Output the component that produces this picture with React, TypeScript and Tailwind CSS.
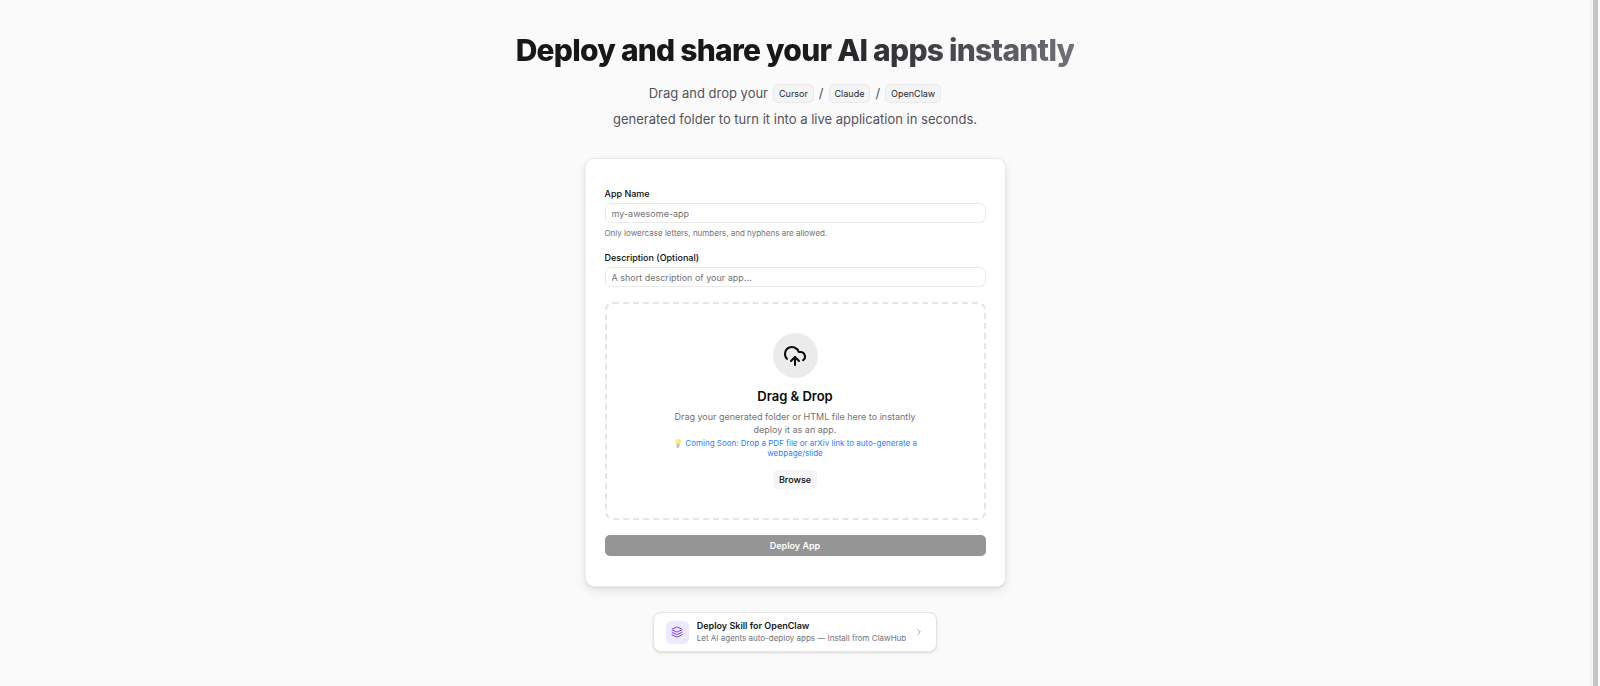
import { ChevronRight, CloudUpload, Layers } from 'lucide-react';

const TOOLS = ['Cursor', 'Claude', 'OpenClaw'];

export default function App() {
  return (
    <div className="flex min-h-screen bg-[#fafafa] font-['Inter',sans-serif] text-[#0a0a0a] antialiased">
      <main className="flex flex-1 flex-col items-center px-4 pt-8 pb-8">
        <Hero />
        <DeployForm />
        <SkillLink />
      </main>
      <div className="flex w-[10px] border-l-2 border-[#f1f1f1] bg-[#f8f8f8] pl-px pr-[2px]" aria-hidden="true">
        <div className="flex-1 bg-[#c4c4c4]" />
      </div>
    </div>
  );
}

function Hero() {
  return (
    <header className="flex flex-col items-center text-center">
      <h1 className="bg-gradient-to-r from-[#18181b] from-50% to-[#71717a] bg-clip-text pb-1 text-[30px] leading-9 font-extrabold tracking-tight text-transparent">
        Deploy and share your AI apps instantly
      </h1>
      <p className="mt-2 text-[13px] leading-[26px] text-[#52525b]">
        <span className="flex items-center justify-center gap-[5px]">
          Drag and drop your
          {TOOLS.map((tool, i) => (
            <span key={tool} className="flex items-center gap-[5px]">
              {i > 0 && <span>/</span>}
              <span className="rounded-[5px] border border-[#e9e9eb] bg-[#f4f4f5] px-[5px] text-[9px] leading-[17px] text-[#27272a]">
                {tool}
              </span>
            </span>
          ))}
        </span>
        generated folder to turn it into a live application in seconds.
      </p>
    </header>
  );
}

function DeployForm() {
  return (
    <form
      className="mt-[26px] w-full max-w-[421px] rounded-[9px] border border-[#ebebeb] bg-white px-[19px] pt-[29px] pb-[30px] shadow-[0_4px_10px_rgb(0_0_0/0.09),0_1px_2px_rgb(0_0_0/0.08)]"
      onSubmit={(e) => e.preventDefault()}
    >
      <Field id="app-name" label="App Name" placeholder="my-awesome-app" />
      <p className="mt-1 text-[8px] leading-3 text-[#737373]">
        Only lowercase letters, numbers, and hyphens are allowed.
      </p>
      <div className="mt-[13px]">
        <Field id="description" label="Description (Optional)" placeholder="A short description of your app..." />
      </div>
      <DropZone />
      <button
        type="submit"
        disabled
        className="mt-[15px] h-[21px] w-full rounded-[5px] bg-[#959595] text-[9px] font-semibold text-white"
      >
        Deploy App
      </button>
    </form>
  );
}

interface FieldProps {
  id: string;
  label: string;
  placeholder: string;
}

function Field({ id, label, placeholder }: FieldProps) {
  return (
    <div>
      <label htmlFor={id} className="block text-[9px] leading-3 font-medium">
        {label}
      </label>
      <input
        id={id}
        type="text"
        placeholder={placeholder}
        className="mt-[3px] block h-5 w-full rounded-[6px] border border-[#ebebeb] bg-white px-[6px] text-[9px] placeholder:text-[#737373]"
      />
    </div>
  );
}

function DropZone() {
  return (
    <div className="mt-[15px] flex flex-col items-center rounded-[8px] border-2 border-dashed border-[#e5e5e5] pt-[29px] pb-[29px] text-center">
      <div className="flex size-[45px] items-center justify-center rounded-full bg-[#ebebeb]">
        <CloudUpload className="size-6" />
      </div>
      <h2 className="mt-2 text-[13px] leading-5 font-semibold">Drag &amp; Drop</h2>
      <p className="mt-1 max-w-64 text-[9px] leading-[13px] text-[#737373]">
        Drag your generated folder or HTML file here to instantly deploy it as an app.
      </p>
      <p className="mt-[2px] max-w-64 text-[8px] leading-[10px] text-[#2b7fff]">
        <span className="opacity-60">💡</span> Coming Soon: Drop a PDF file or arXiv link to auto-generate a webpage/slide
      </p>
      <button type="button" className="mt-3 rounded-[5px] bg-[#f5f5f5] px-[6px] text-[9px] leading-[19px] font-medium">
        Browse
      </button>
    </div>
  );
}

function SkillLink() {
  return (
    <a
      href="#openclaw"
      className="mt-[25px] flex items-center rounded-[8px] border border-[#e4e4e7] bg-white px-3 py-[7px] shadow-sm"
    >
      <span className="flex size-[23px] items-center justify-center rounded-[5px] bg-[#ede9fe]">
        <Layers className="size-3 text-[#7c3aed]" />
      </span>
      <span className="ml-2">
        <span className="block text-[9px] leading-3 font-semibold text-[#18181b]">Deploy Skill for OpenClaw</span>
        <span className="block text-[8px] leading-3 text-[#71717a]">
          Let AI agents auto-deploy apps — Install from ClawHub
        </span>
      </span>
      <ChevronRight className="ml-2 size-[10px] text-[#8a8a93]" />
    </a>
  );
}
